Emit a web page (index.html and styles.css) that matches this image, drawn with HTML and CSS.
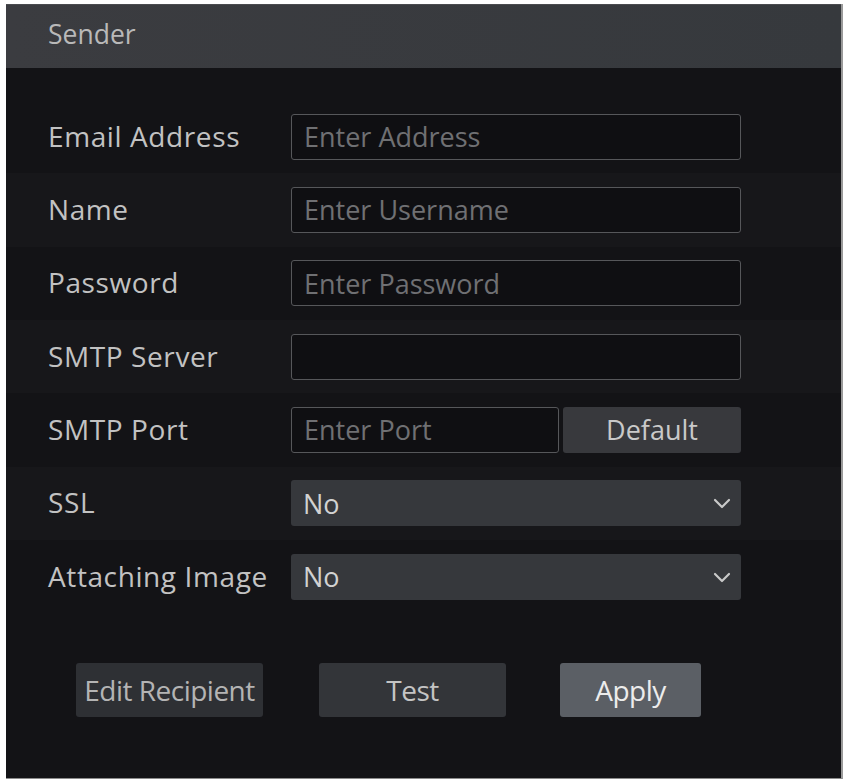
FILE: index.html
```html
<!DOCTYPE html>
<html lang="en">
<head>
  <meta charset="UTF-8">
  <meta name="viewport" content="width=device-width, initial-scale=1.0">
  <title>Email Settings</title>
  <link rel="stylesheet" href="styles.css">
</head>
<body>
    <div class="panel">
        <div class="panel-header">Sender</div>

        <div class="form">
            <div class="form-row">
                <label class="form-label">Email Address</label>
                <input type="text" class="text-input" placeholder="Enter Address">
            </div>
            <div class="form-row">
                <label class="form-label">Name</label>
                <input type="text" class="text-input" placeholder="Enter Username">
            </div>
            <div class="form-row">
                <label class="form-label">Password</label>
                <input type="password" class="text-input" placeholder="Enter Password">
            </div>
            <div class="form-row">
                <label class="form-label">SMTP Server</label>
                <input type="text" class="text-input">
            </div>
            <div class="form-row">
                <label class="form-label">SMTP Port</label>
                <div class="port-group">
                    <input type="text" class="text-input port-input" placeholder="Enter Port">
                    <button class="btn btn-default">Default</button>
                </div>
            </div>
            <div class="form-row">
                <label class="form-label">SSL</label>
                <div class="select-box">
                    <span>No</span>
                    <svg class="chevron" width="18" height="12" viewBox="0 0 18 12">
                        <path d="M2 3 L9 10 L16 3" fill="none" stroke="#c9c9c9" stroke-width="2.2" stroke-linecap="round" stroke-linejoin="round"/>
                    </svg>
                </div>
            </div>
            <div class="form-row">
                <label class="form-label">Attaching Image</label>
                <div class="select-box">
                    <span>No</span>
                    <svg class="chevron" width="18" height="12" viewBox="0 0 18 12">
                        <path d="M2 3 L9 10 L16 3" fill="none" stroke="#c9c9c9" stroke-width="2.2" stroke-linecap="round" stroke-linejoin="round"/>
                    </svg>
                </div>
            </div>
        </div>

        <div class="actions">
            <button class="btn btn-edit">Edit Recipient</button>
            <button class="btn btn-test">Test</button>
            <button class="btn btn-apply">Apply</button>
        </div>
    </div>
</body>
</html>
```

FILE: styles.css
```css
body {
    margin: 0;
    padding: 4px 0 0 6px;
    background-color: #ffffff;
    font-family: "Open Sans", "Noto Sans", sans-serif;
}
.panel {
    width: 837px;
    height: 775px;
    background-color: #131316;
    border-right: 2px solid #9a9a9a;
    border-bottom: 1px solid #8c8c8c;
    box-sizing: border-box;
}
.panel-header {
    height: 64px;
    padding-left: 42px;
    display: flex;
    align-items: center;
    background: linear-gradient(to right, #3b3c40, #36393d);
    border-top: 1px solid #4a4b4f;
    box-sizing: border-box;
    color: #b9b9b9;
    font-size: 26.5px;
    padding-bottom: 6px;
}
.form {
    padding-top: 32px;
}
.form-row {
    height: 73.33px;
    display: flex;
    align-items: center;
    padding-left: 42px;
}
.form-row:nth-child(even) {
    background-color: #17171a;
}
.form-label {
    width: 243px;
    flex-shrink: 0;
    color: #c2c2c2;
    font-size: 28px;
    letter-spacing: 0.6px;
    padding-bottom: 2px;
    white-space: nowrap;
}
.text-input {
    width: 450px;
    height: 46px;
    box-sizing: border-box;
    background-color: #0f0f12;
    border: 1px solid #56575a;
    border-radius: 3px;
    padding: 0 12px;
    color: #c8c8c8;
    font-family: inherit;
    font-size: 27px;
    outline: none;
}
.text-input::placeholder {
    color: #6f7073;
}
.port-group {
    display: flex;
    gap: 4px;
}
.port-input {
    width: 268px;
}
.btn {
    border: none;
    border-radius: 3px;
    font-family: inherit;
    cursor: pointer;
}
.btn-default {
    width: 178px;
    height: 46px;
    background-color: #38393d;
    color: #c9c9c9;
    font-size: 27px;
}
.select-box {
    width: 450px;
    height: 46px;
    box-sizing: border-box;
    background-color: #36383c;
    border-radius: 3px;
    padding: 0 10px 0 12px;
    display: flex;
    align-items: center;
    justify-content: space-between;
    color: #d2d2d2;
    font-size: 27px;
}
.actions {
    display: flex;
    padding: 50px 0 0 70px;
}
.actions .btn {
    height: 54px;
    font-size: 28px;
    letter-spacing: -0.5px;
    padding: 0;
}
.btn-edit {
    width: 187px;
    background-color: #2e3034;
    color: #b4b4b4;
    margin-right: 56px;
}
.btn-test {
    width: 187px;
    background-color: #333539;
    color: #c4c4c4;
    margin-right: 54px;
}
.btn-apply {
    width: 141px;
    background-color: #5b5f65;
    color: #ececec;
}
```
